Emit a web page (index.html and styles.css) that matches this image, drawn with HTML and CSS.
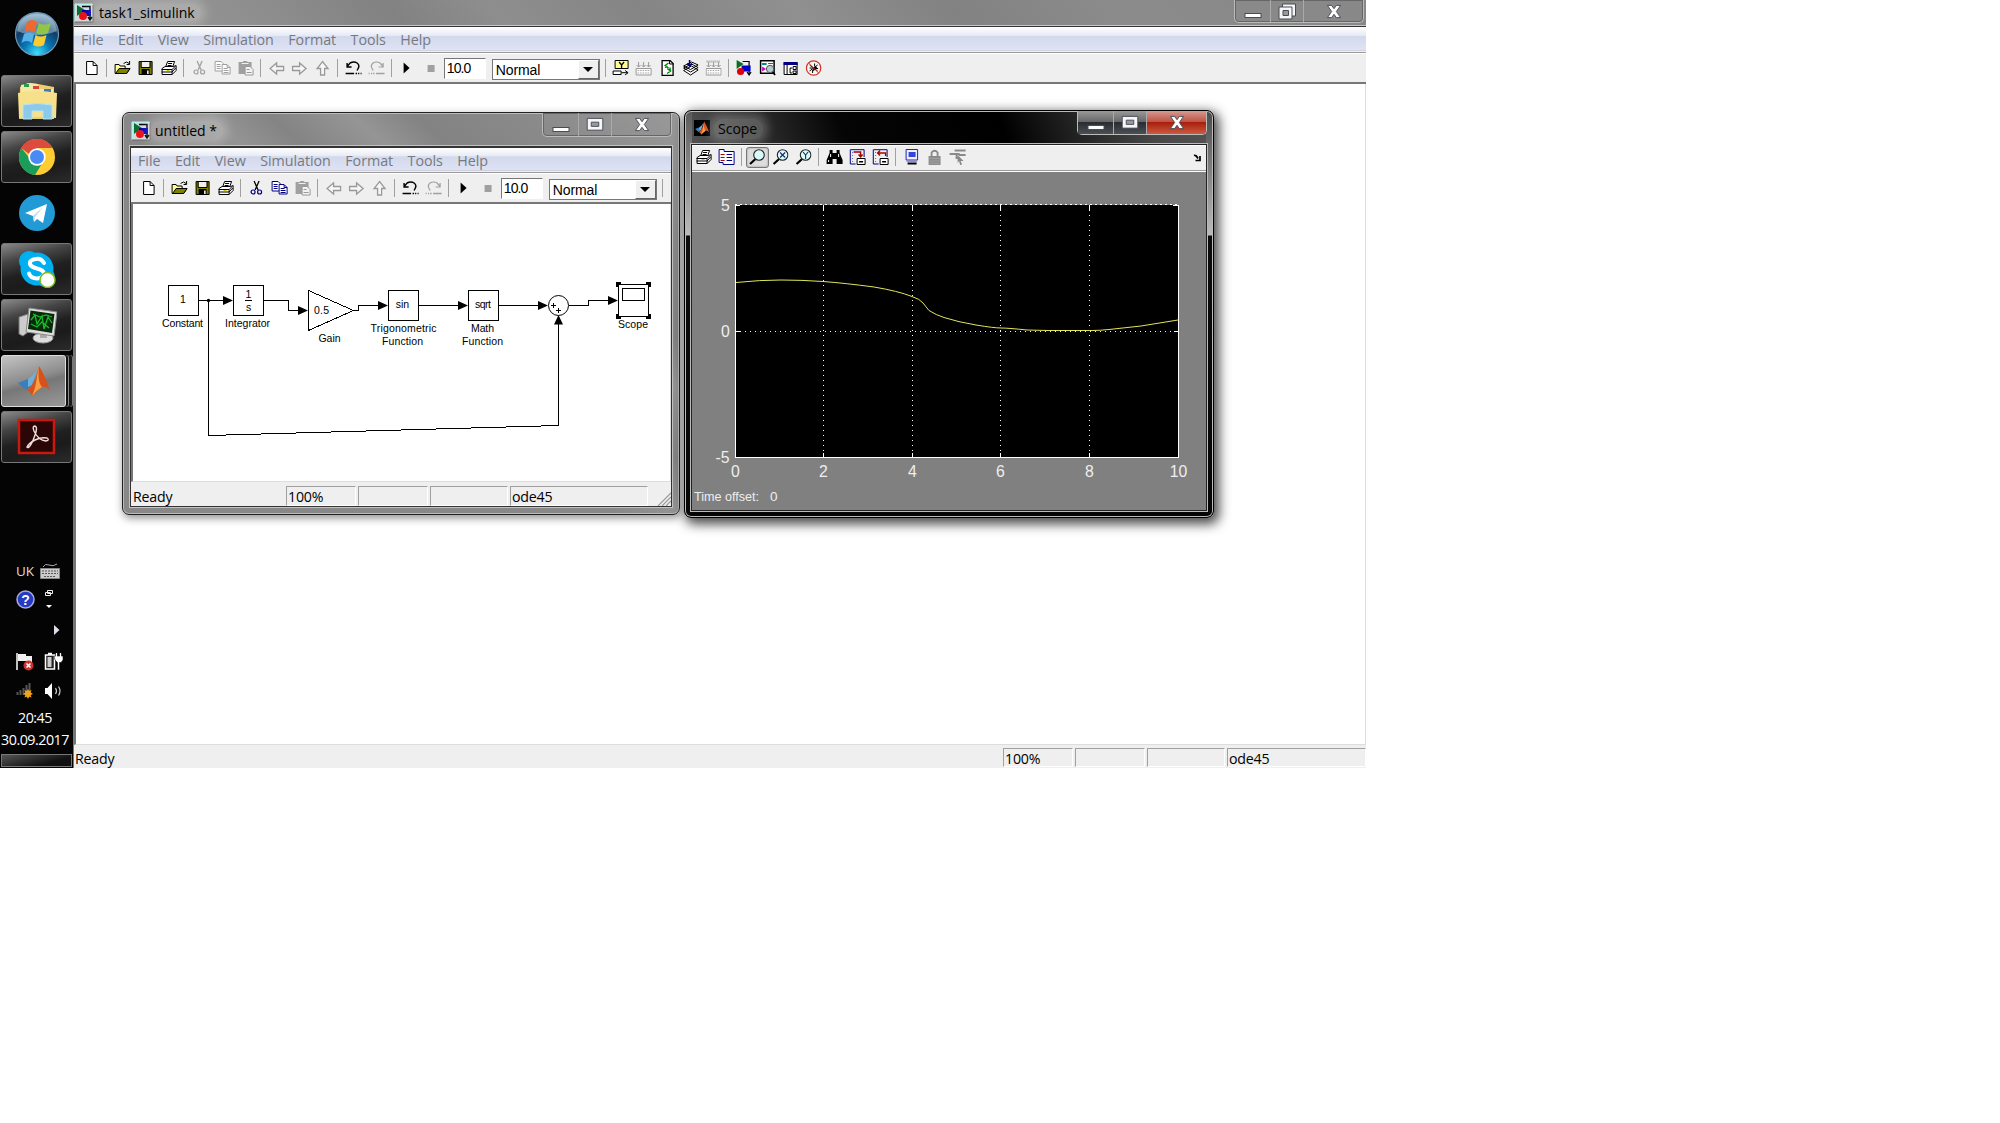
FILE: index.html
```html
<!DOCTYPE html>
<html lang="en">
<head>
<meta charset="utf-8">
<title>task1_simulink</title>
<link rel="stylesheet" href="styles.css">
</head>
<body>
<svg class="sprite" aria-hidden="true">
  <symbol id="i-new" viewBox="0 0 16 16"><path d="M3 1.5h6.500l4 4v9h-10.500z" fill="#fff" stroke="#000"/><path d="M9.500 1.500v4h4" fill="none" stroke="#000"/></symbol>
  <symbol id="i-open" viewBox="0 0 16 16"><path d="M.5 13.500v-9h4l1 1.500h5v3h4.500l-3 4.500z" fill="#ff9" stroke="#000"/><path d="M1 13.500l3.500-5h11l-3.500 5z" fill="#808000" stroke="#000"/><path d="M9 3.500q3-3 5.500 0M15 1v3.500h-3" fill="none" stroke="#000"/></symbol>
  <symbol id="i-save" viewBox="0 0 16 16"><path d="M1.500 1.500h13v13h-13z" fill="#808000" stroke="#000"/><path d="M4 2h8v5h-8z" fill="#efefef"/><path d="M3.500 1.500v6h9v-6" fill="none" stroke="#000"/><path d="M4 9h8v6h-8z"/><path d="M9.500 10.500h1.500v3.500h-1.500z" fill="#fff"/></symbol>
  <symbol id="i-print" viewBox="0 0 16 16"><path d="M5 7l2-5.500h7l-2 5.500M1.500 8.500l3-2h8.500l2.500-1v5l-4 4h-10z" fill="#fff" stroke="#000"/><path d="M7.500 3.500h4M7 5.500h4M1 9.500h10.500l3-3M1 12h10.500l3.500-4M11.500 9.500v5" fill="none" stroke="#000"/><path d="M6 10.500h3" stroke="#cc0"/></symbol>
  <symbol id="i-cut" viewBox="0 0 16 16"><path d="M5.500 1l4 9M10.500 1l-4 9" fill="none" class="k" stroke-width="1.300"/><circle cx="4.500" cy="12" r="2" fill="none" stroke="currentColor" stroke-width="1.200"/><circle cx="11" cy="12" r="2" fill="none" stroke="currentColor" stroke-width="1.200"/></symbol>
  <symbol id="i-copy" viewBox="0 0 16 16"><path d="M.500 1.500h6l2 2v7.500h-8z" fill="#fff" stroke="currentColor"/><path d="M2 4.500h4M2 6.500h4M2 8.500h4" stroke="currentColor"/><path d="M7.500 4.500h5l3 3v6.500h-8z" fill="#fff" stroke="currentColor"/><path d="M9 8.500h4M9 10.500h5M9 12.500h5M12.500 5v2.500h3" fill="none" stroke="currentColor"/></symbol>
  <symbol id="i-paste" viewBox="0 0 16 16"><path d="M1 2h4l1-1h3l1 1h4v12H1z" fill="#a0a0a0"/><path d="M4 3.500h7" stroke="#efefef"/><path d="M7.500 6.500h5l3 3v5.500h-8z" fill="#f4f4f4" stroke="#999"/><path d="M9 9.500h3M9 12.500h5" stroke="#999"/></symbol>
  <symbol id="i-left" viewBox="0 0 16 16"><path d="M15 6.500v4h-7v3.500l-6.500-5.500 6.500-5.500v3.500z" fill="#f7f7f7" stroke="#999" stroke-width="1.300"/></symbol>
  <symbol id="i-right" viewBox="0 0 16 16"><path d="M1 6.500v4h7v3.500l6.500-5.500-6.500-5.500v3.500z" fill="#f7f7f7" stroke="#999" stroke-width="1.300"/></symbol>
  <symbol id="i-up" viewBox="0 0 16 16"><path d="M6 15h4V8.500h3.500L8 1.500 2.500 8.500H6z" fill="#f7f7f7" stroke="#999" stroke-width="1.300"/></symbol>
  <symbol id="i-undo" viewBox="0 0 16 16"><path d="M2 6l2.500-3q4-2 7 0 3 2.500 1 5.500l-1 2M1.500 3v4h4.500" fill="none" stroke="currentColor" stroke-width="1.400"/><path d="M0 13.500h8.500M10 13.500h1.500M12.500 13.500h1.200M15 13.500h1" stroke="currentColor" stroke-width="1.600"/></symbol>
  <symbol id="i-redo" viewBox="0 0 16 16"><path d="M14 6l-2.500-3q-4-2-7 0-3 2.500-1 5.500l1 2M14.500 3v4H10" fill="none" stroke="currentColor" stroke-width="1.200"/><path d="M7.500 13.500H16M6 13.500H4.500M3.500 13.500H2.300M1 13.500H0" stroke="currentColor" stroke-width="1.400"/></symbol>
  <symbol id="i-play" viewBox="0 0 16 16"><path d="M5 2.500v11l6-5.500z"/></symbol>
  <symbol id="i-stop" viewBox="0 0 16 16"><path d="M5 5h7v7H5z" fill="#a0a0a0"/></symbol>
  <symbol id="i-y" viewBox="0 0 16 16"><path d="M2.500.500h13v8h-13z" fill="#ffff90" stroke="#000"/><path d="M6.500 2l2.500 3 2.500-3M9 5v3" fill="none" stroke="#000" stroke-width="1.300"/><path d="M.5 11h8v3.500h-8z" fill="#fff" stroke="#000"/><path d="M9 12.700h6M12.500 10.500l3 2.200-3 2.200" fill="none" stroke="#000"/></symbol>
  <symbol id="i-build" viewBox="0 0 16 16"><path d="M.500 8.500h15v6.500H.500z" fill="#fafafa" stroke="#999"/><path d="M2 10.500h12M2 13h12" stroke="#aaa" stroke-dasharray="1.500 1"/><path d="M3 2v5M8 2v5M13 2v5M1 5l2 2 2-2M6 5l2 2 2-2M11 5l2 2 2-2" fill="none" stroke="#999"/></symbol>
  <symbol id="i-build2" viewBox="0 0 16 16"><use href="#i-build"/><path d="M1 1.500h14" stroke="#999" stroke-width="2" stroke-dasharray="1 1"/></symbol>
  <symbol id="i-update" viewBox="0 0 16 16"><path d="M2.500.500h8l3 3v12h-11z" fill="#fff" stroke="#000" stroke-width="1.300"/><path d="M10 .500v3.500h4" fill="none" stroke="#000"/><path d="M9 3L5.500 5.500 9 8M6 5.500V8M7.500 8.500l3.500 2.500-3.500 2.500M10.500 11V7.500" fill="none" stroke="#080" stroke-width="1.400"/></symbol>
  <symbol id="i-stack" viewBox="0 0 16 16"><path d="M1 10.500L9 6l6.500 4L8 15zM1 8l8-4 6.500 3.500L8 12zM1 6l8-4 6.500 3L8 9.500z" fill="#fff" stroke="#000"/><path d="M7 0v5M4.500 3.500L7 6l2.500-2.500" fill="none" stroke="#008" stroke-width="1.600"/></symbol>
  <symbol id="i-model" viewBox="0 0 16 16"><path d="M1 0v9l7-5z" fill="#087020"/><path d="M7 1.500h6.500v13M11.500 12l2 3 2-3" fill="none" stroke="#000" stroke-width="1.200"/><path d="M6 5.500h9v6H6z" fill="#00c"/><circle cx="5" cy="11.500" r="3.600" fill="#e00010"/></symbol>
  <symbol id="i-explore" viewBox="0 0 16 16"><path d="M1 .800h13.500v12.500H1z" fill="#fff" stroke="#000" stroke-width="1.500"/><path d="M2.500 4h4.500" stroke="#088" stroke-width="2"/><path d="M8.500 3.500h5" stroke="#555"/><path d="M2.500 6.500l4 2.500-4 2.500z" fill="#c0c"/><circle cx="10.500" cy="9" r="3.700" fill="#b4ccd2" stroke="#555"/><path d="M13 12l2.500 3" stroke="#000" stroke-width="1.700"/></symbol>
  <symbol id="i-tree" viewBox="0 0 16 16"><path d="M1.500 2.500h13v12h-13z" fill="#fff" stroke="#000"/><path d="M1 2h14v3H1z" fill="#000080"/><path d="M4.500 5v9M7.500 8v5h2M7.500 8h2M10.500 6.500h3v3h-3zM10.500 11h3v2.500h-3z" fill="none" stroke="#000"/></symbol>
  <symbol id="i-bug" viewBox="0 0 16 16"><circle cx="8" cy="8" r="7.200" fill="#fff" fill-opacity=".5" stroke="#d33022" stroke-width="1.200"/><path d="M4 5l8 6M12 5l-8 6M9 3.500v3M4 8h3M9.500 8.500h3M7 10v3" stroke="#000"/><path d="M7 10l3-4 1.500 1.500L8 11z"/><path d="M3 3l10 10" stroke="#d33022"/></symbol>
  <symbol id="i-params" viewBox="0 0 16 16"><path d="M.500.500h5v2h10v13H4.500v-2h-4z" fill="#fff" stroke="#008"/><path d="M2 5.500h4M2 8.500h4M2 11.500h4" stroke="#a00"/><path d="M8 5.500h5.500M8 8.500h5.500M8 11.500h5.500" fill="none" stroke="#008"/></symbol>
  <symbol id="i-zoom" viewBox="0 0 16 16"><path d="M6.500 10L1 15" stroke="#000" stroke-width="2.200"/><circle cx="10" cy="6" r="5.300" fill="#d8fbfb" stroke="#222" stroke-width="1.100"/></symbol>
  <symbol id="i-zoomx" viewBox="0 0 16 16"><use href="#i-zoom"/><path d="M7.500 3.500l5 5M12.500 3.500l-5 5" stroke="#226" stroke-width="1.100"/></symbol>
  <symbol id="i-zoomy" viewBox="0 0 16 16"><use href="#i-zoom"/><path d="M7.500 3l2.500 3 2.500-3M10 6v4" fill="none" stroke="#226" stroke-width="1.100"/></symbol>
  <symbol id="i-bino" viewBox="0 0 16 16"><path d="M3 1h3v3h4V1h3v3l3 7v4h-6v-5H6v5H0v-4l3-7z"/><path d="M4 5v3M12 5v3M2 11v2" stroke="#fff"/></symbol>
  <symbol id="i-axes" viewBox="0 0 16 16"><path d="M.700.500v14.500H6M1 .700h13.500V8" fill="none" stroke="#008"/><path d="M3 3v11" stroke="#66c" stroke-dasharray="1 2"/><path d="M4 3h7v4M9 5.500l2 2.500 2-2.500" fill="none" stroke="#a00" stroke-width="1.400"/><path d="M7.500 9.500h8v6h-8z" fill="#fff" stroke="#000"/><path d="M9.500 12h4v1.500h-4z"/></symbol>
  <symbol id="i-axes2" viewBox="0 0 16 16"><path d="M.700.500v14.500H6M1 .700h13.500V8" fill="none" stroke="#008"/><path d="M3 3v11" stroke="#66c" stroke-dasharray="1 2"/><path d="M13 7V4H5M7.500 1.500L5 4l2.500 2.500" fill="none" stroke="#a00" stroke-width="1.400"/><path d="M7.500 9.500h8v6h-8z" fill="#fff" stroke="#000"/><path d="M9.500 12h4v1.500h-4z"/></symbol>
  <symbol id="i-float" viewBox="0 0 16 16"><path d="M2.500.500h11.500v10.500h-11.500z" fill="#eef" stroke="#22b"/><path d="M5 3h7v5H5z" fill="#3344d8"/><path d="M4 14.500h9" stroke="#000" stroke-width="1.800"/><path d="M3 12.500h10.500" stroke="#999"/></symbol>
  <symbol id="i-lock" viewBox="0 0 16 16"><path d="M5 7V3.500q3-3.500 6 0V7" fill="none" stroke="#888" stroke-width="1.800"/><path d="M2 7h12v9H2z" fill="#8c8c8c"/><path d="M3 9.500h10M3 12h10M3 14.300h10" stroke="#aaa" stroke-width=".7"/></symbol>
  <symbol id="i-sel" viewBox="0 0 16 16"><path d="M0 5h10M5 1.500h11M7 5v4h3M9 6h7" fill="none" stroke="#8a8a8a" stroke-width="2"/><path d="M8 6l6 6-3 0 1.500 3.500-2 .5-1-4-1.500 2z" fill="#888"/></symbol>
  <symbol id="i-app" viewBox="0 0 20 20"><path d="M1 1h18v18H1z" fill="#d8d8dc"/><path d="M1 19V1h17" fill="none" stroke="#9ff"/><path d="M1 19h18V2" fill="none" stroke="#666"/><path d="M3 2v11l8-6z" fill="#087030"/><path d="M8 3.500h8v13M14 14l2 3 2-3" fill="none" stroke="#000" stroke-width="1.500"/><path d="M8 7h9v6H8z" fill="#0000b0"/><circle cx="9" cy="13" r="4" fill="#e81018"/></symbol>
  <symbol id="i-matlab" viewBox="0 0 32 30"><path d="M0 17l10-4 5 5-7 6z" fill="#3a7fba"/><path d="M10 13q5-3 8-8l2-4-6 18-4 2z" fill="#6cb0dc"/><path d="M21 0q5 8 11 24-5-5-8-3l-10 9q-2-6-6-6 8-2 13-24z" fill="#d8511c"/><path d="M21 0q-2 16 3 21-5 3-10 9 4-9 5-20z" fill="#f6a040"/></symbol>
  <symbol id="w-min" viewBox="0 0 18 16"><rect x="1" y="10.500" width="16" height="4" fill="#fff" stroke="#484c55"/></symbol>
  <symbol id="w-max" viewBox="0 0 18 16"><path d="M.700 1.500h16.600v12.500H.700z" fill="#f6f6f8" stroke="#484c55"/><path d="M5 5.500h8v4.500H5z" fill="#999" stroke="#484c55"/></symbol>
  <symbol id="w-restore" viewBox="0 0 18 17"><path d="M4.500 1h13v12h-13z" fill="#f6f6f8" stroke="#484c55"/><path d="M1 4h13v12H1z" fill="#f6f6f8" stroke="#484c55"/><path d="M5 7.500h5.500v5H5z" fill="#999" stroke="#484c55"/></symbol>
  <symbol id="w-x" viewBox="0 0 16 16"><path d="M1 1.500h4.500L8 5l2.500-3.500H15L10.500 8l4.500 6.500h-4.500L8 11l-2.500 3.500H1L5.500 8z" fill="#fff" stroke="#484c55"/></symbol>
</svg>

<div class="desktop">
  <aside class="taskbar">
    <div class="start"><svg viewBox="0 0 46 46">
      <defs><radialGradient id="orb" cx=".5" cy=".95" r=".9"><stop offset="0" stop-color="#3ee0ff"/><stop offset=".35" stop-color="#0878b8"/><stop offset=".7" stop-color="#123c66"/><stop offset="1" stop-color="#7fa6c4"/></radialGradient></defs>
      <circle cx="23" cy="23" r="21.500" fill="url(#orb)" stroke="#6f9ab4" stroke-width="1.200"/>
      <path d="M3 20Q6 3 23 3t20 17Q23 28 3 20z" fill="#c9dde9" opacity=".45"/>
      <path d="M13 11q5-4 10 0l-2.500 10q-5-3-10 0z" fill="#ec6a32"/><path d="M25 12q5 3 12 0l-3 10q-6 3-12 0z" fill="#92c547"/>
      <path d="M10 23q5-3 10 0l-2 9q-5-4-10.500 0z" fill="#57b1ea"/><path d="M21.500 24q5 3 11 0L30 34q-6 3-11 0z" fill="#fccb30"/></svg></div>
    <div class="task"><svg viewBox="0 0 40 40" width="40" height="40"><path d="M3 6l8-4 10 1 16 3v32H2z" fill="#e8cf70"/><path d="M4 4l9-2 8 1v5h15v4H4z" fill="#f5e7a4"/><path d="M7 3h5v3H7z" fill="#2c9d4a"/><path d="M16 5h6v3h-6z" fill="#d43"/><path d="M27 8h7v3h-7z" fill="#47b"/><path d="M1 12q19-4 39 0l-1 25q-18-2-37 0z" fill="#f6e08a"/><path d="M6 24q14-3 29 0v14H26v-8H15v8H6z" fill="#8cc9ea" stroke="#b6e2f5"/></svg></div>
    <div class="task"><svg viewBox="0 0 38 38" width="38" height="38"><circle cx="19" cy="19" r="18" fill="#fc3"/><path d="M19 19L3.400 10A18 18 0 0 1 34.600 10H19z" fill="#dd4b3e"/><path d="M3.400 10A18 18 0 0 0 17 37l8-13-12-2z" fill="#1b9d5a"/><path d="M3.400 10A18 18 0 0 1 34.600 10H19a9 9 0 0 0-8 6z" fill="#dd4b3e"/><circle cx="19" cy="19" r="8.700" fill="#fff"/><circle cx="19" cy="19" r="7" fill="#4a8af4"/></svg></div>
    <div class="task plain"><svg viewBox="0 0 38 38" width="38" height="38"><circle cx="19" cy="19" r="18" fill="#229ad6"/><path d="M7 19l22-9-4 19-6-4-3 3-1-6z" fill="#fff"/><path d="M15 22l10-9-8 10-1 5z" fill="#c1d9ea"/></svg></div>
    <div class="task"><svg viewBox="0 0 38 38" width="38" height="38"><circle cx="11" cy="11" r="10" fill="#00aff0"/><circle cx="27" cy="27" r="10" fill="#00aff0"/><circle cx="19" cy="19" r="16.500" fill="#00aff0"/><path d="M26 13q-3-5-8-4-7 1-6 5 1 3 7 4.500 7 1.500 7 5.500-1 4-7 4.500-6 0-8-5" fill="none" stroke="#fff" stroke-width="4" stroke-linecap="round"/><circle cx="29.500" cy="30" r="7.500" fill="#fff" stroke="#7fba22" stroke-width="1.500"/></svg></div>
    <div class="task"><svg viewBox="0 0 40 38" width="40" height="38"><path d="M2 11l9-3v18l-5 4-4-2z" fill="#ccc" stroke="#777"/><ellipse cx="26" cy="32" rx="10" ry="5" fill="#ddd" stroke="#999"/><path d="M23 25h7v7h-7z" fill="#aaa"/><path d="M12 2l28 4-3 24-28-4z" fill="#ddd" stroke="#888"/><path d="M13.500 4.500l24 3.500-2.500 19-24-4z" fill="#072a0a"/><path d="M14 14l4-5 2 9 5-8 2 13 4-12 4 6M14 18l6 3 5-5 7 6M16 8l7 3 6-2 6 2" fill="none" stroke="#1bb92a" stroke-width="1.300"/></svg></div>
    <div class="task active"><svg width="32" height="30"><use href="#i-matlab"/></svg></div>
    <div class="task"><svg viewBox="0 0 40 38" width="40" height="38"><path d="M2 2h35v33H2z" fill="#2a0706" stroke="#c9190f" stroke-width="2.500"/><path d="M10 29q2-4 8-7 6-3 12-2 3 2-1 3-8-1-12-10-2-5 1-5 3 1 0 9-3 9-6 12-2 1-2 0z" fill="none" stroke="#f5dfdd" stroke-width="1.400"/></svg></div>
    <div class="tray">
      <div class="row r1"><span>UK</span><svg width="20" height="16" viewBox="0 0 20 16"><path d="M3 4q2-4 6-2t8-1" fill="none" stroke="#aaa"/><path d="M.500 5.500h19v10H.500z" fill="#ccc" stroke="#888"/><path d="M2 8h16M2 10.500h16M4 13.500h12" stroke="#555" stroke-dasharray="2 1"/></svg></div>
      <div class="row r2"><svg width="19" height="19" viewBox="0 0 19 19"><circle cx="9.500" cy="9.500" r="8.500" fill="#2738c4" stroke="#aaaed0" stroke-width="1.500"/><text x="9.500" y="14.500" text-anchor="middle" class="q">?</text></svg><svg width="10" height="20" viewBox="0 0 10 20"><path d="M3.500 1.500h5v3h-5zM1.500 3.500h5v3h-5z" fill="#000" stroke="#eee"/><path d="M2 16h6l-3 3z" fill="#fff"/></svg></div>
      <div class="row r3"><svg width="6" height="10"><path d="M0 0v10l5.500-5z" fill="#dde"/></svg></div>
      <div class="row r4"><svg width="18" height="19" viewBox="0 0 18 19"><path d="M1 1v17" stroke="#fff" stroke-width="1.500"/><path d="M2 2h8v2h6v7H10V9H2z" fill="#f1f1f1"/><circle cx="12.500" cy="13.500" r="5" fill="#d2302a"/><path d="M10.500 11.500l4 4M14.500 11.500l-4 4" stroke="#fff" stroke-width="1.600"/></svg><svg width="19" height="19" viewBox="0 0 19 19"><path d="M1.500 3h9v14h-9zM4 1.500h4" fill="#222" stroke="#fff" stroke-width="1.500"/><path d="M3.500 5h4v10h-4z" fill="#ccc"/><path d="M10 4h9v4l-2 2.500h-1.500V18h-2v-7.500L11 8z" fill="#fff" stroke="#111" stroke-width=".6"/><path d="M12.500 1v4M16.500 1v4" stroke="#fff" stroke-width="1.300"/></svg></div>
      <div class="row r5"><svg width="18" height="18" viewBox="0 0 18 18"><path d="M1.500 10v3M4.500 8v5M7.500 6v7M10.500 3v10M13.500 1v12" stroke="#555" stroke-width="2"/><path d="M12 7l1.200 2 2.300-1-.8 2.500 2.300 1.500-2.300 1 .8 2.500-2.300-.8L12 17l-1.200-2.300-2.300.8.800-2.500-2.300-1 2.300-1.500-.8-2.500 2.300 1z" fill="#f2a31c"/></svg><svg width="19" height="18" viewBox="0 0 19 18"><path d="M1 6h2.500L8 1v16l-4.500-5H1z" fill="#fff"/><path d="M11.500 6q2 3 0 6M14.500 4.500q3 4.500 0 9" fill="none" stroke="#ccc" stroke-width="1.200"/></svg></div>
      <div class="clock">20:45</div><div class="date">30.09.2017</div>
    </div>
    <div class="peek"></div>
  </aside>

  <main class="app">
    <header class="title"><svg width="20" height="20"><use href="#i-app"/></svg><span class="name">task1_simulink</span>
      <div class="wbtns"><b><svg width="18" height="16"><use href="#w-min"/></svg></b><b><svg width="18" height="17"><use href="#w-restore"/></svg></b><b><svg width="16" height="15"><use href="#w-x"/></svg></b></div></header>
    <nav class="menu"><span>File</span><span>Edit</span><span>View</span><span>Simulation</span><span>Format</span><span>Tools</span><span>Help</span></nav>
    <div class="tools">
      <svg><use href="#i-new"/></svg><i></i><svg><use href="#i-open"/></svg><svg><use href="#i-save"/></svg><svg><use href="#i-print"/></svg><i></i>
      <svg class="off"><use href="#i-cut"/></svg><svg class="off"><use href="#i-copy"/></svg><svg><use href="#i-paste"/></svg><i></i>
      <svg><use href="#i-left"/></svg><svg><use href="#i-right"/></svg><svg><use href="#i-up"/></svg><i></i>
      <svg><use href="#i-undo"/></svg><svg class="off"><use href="#i-redo"/></svg><i></i><svg><use href="#i-play"/></svg><svg><use href="#i-stop"/></svg>
      <span class="time">10.0</span><span class="mode">Normal<em></em></span><i></i>
      <svg><use href="#i-y"/></svg><svg><use href="#i-build"/></svg><svg><use href="#i-update"/></svg><svg><use href="#i-stack"/></svg><svg><use href="#i-build2"/></svg><i></i>
      <svg><use href="#i-model"/></svg><svg><use href="#i-explore"/></svg><svg><use href="#i-tree"/></svg><svg><use href="#i-bug"/></svg>
    </div>
    <div class="canvas"></div>
    <footer class="status"><span class="ready">Ready</span><span class="c1">100%</span><span class="c2"></span><span class="c3"></span><span class="c4">ode45</span></footer>
  </main>

  <section class="win model">
    <header class="title"><svg width="20" height="20"><use href="#i-app"/></svg><span class="name">untitled *</span>
      <div class="wbtns"><b><svg width="18" height="16"><use href="#w-min"/></svg></b><b><svg width="18" height="15"><use href="#w-max"/></svg></b><b><svg width="16" height="15"><use href="#w-x"/></svg></b></div></header>
    <div class="client">
      <nav class="menu"><span>File</span><span>Edit</span><span>View</span><span>Simulation</span><span>Format</span><span>Tools</span><span>Help</span></nav>
      <div class="tools">
        <svg><use href="#i-new"/></svg><i></i><svg><use href="#i-open"/></svg><svg><use href="#i-save"/></svg><svg><use href="#i-print"/></svg><i></i>
        <svg class="navy"><use href="#i-cut"/></svg><svg class="navy"><use href="#i-copy"/></svg><svg><use href="#i-paste"/></svg><i></i>
        <svg><use href="#i-left"/></svg><svg><use href="#i-right"/></svg><svg><use href="#i-up"/></svg><i></i>
        <svg><use href="#i-undo"/></svg><svg class="off"><use href="#i-redo"/></svg><i></i><svg><use href="#i-play"/></svg><svg><use href="#i-stop"/></svg>
        <span class="time">10.0</span><span class="mode">Normal<em></em></span><i></i>
      </div>
      <div class="canvas"><svg class="diagram" viewBox="133 204 537 277">
        <g fill="none" stroke="#000" shape-rendering="crispEdges">
          <path d="M168.500 285.500h30v30h-30zM233.500 285.500h30v30h-30zM388.500 290.500h30v30h-30zM468.500 290.500h30v30h-30z"/>
          <path d="M198.500 300.500h33M208.500 300.500v135L558.500 425.500V320M263.500 300.500h25v10h18M308.500 290.500v40l45-20zM353.500 310.500h5v-5h28M418.500 305.500h48M498.500 305.500h48M568.500 305.500h20v-5h28M245 300.500h7"/>
          <path d="M618.500 284.500h30v32h-30z"/><path d="M622.500 288.500h22v12h-22z"/>
          <path d="M553.500 303v5M551 305.500h5M558.500 308v5M556 310.500h5"/>
        </g>
        <circle cx="558.500" cy="305.500" r="10" fill="none" stroke="#000"/>
        <path d="M233 300.500l-10-4.500v9zM308 310.500l-10-4.500v9zM388 305.500l-10-4.500v9zM468 305.500l-10-4.500v9zM548 305.500l-10-4.500v9zM618 300.500l-10-4.500v9zM558.500 315l-4.500 9.500h9z"/><circle cx="208.500" cy="300.500" r="1.700"/>
        <path d="M616 282h5v2h-3v3h-2zM651 282h-5v2h3v3h2zM616 319h5v-2h-3v-3h-2zM651 319h-5v-2h3v-3h2z"/>
        <g class="lbl">
          <text x="183" y="303">1</text><text x="248.500" y="298">1</text><text x="248.500" y="310.500">s</text><text x="321.500" y="313.500" textLength="15">0.5</text><text x="402.500" y="308">sin</text><text x="483" y="308" textLength="16">sqrt</text>
          <text x="182.500" y="327" textLength="41">Constant</text><text x="247.500" y="327" textLength="45">Integrator</text><text x="329.500" y="342" textLength="22">Gain</text>
          <text x="403.500" y="332" textLength="66">Trigonometric</text><text x="402.500" y="345" textLength="41">Function</text><text x="482.500" y="332" textLength="23">Math</text><text x="482.500" y="345" textLength="41">Function</text><text x="633" y="328" textLength="30">Scope</text>
        </g></svg></div>
      <footer class="status"><span class="ready">Ready</span><span class="c1">100%</span><span class="c2"></span><span class="c3"></span><span class="c4">ode45</span><svg width="14" height="14"><path d="M1 14L14 1M5 14l9-9M9 14l5-5" stroke="#999" stroke-width="1.200"/></svg></footer>
    </div>
  </section>

  <section class="win scope">
    <header class="title"><span class="mico"><svg width="14" height="14"><use href="#i-matlab"/></svg></span><span class="name">Scope</span>
      <div class="wbtns"><b><svg width="18" height="16"><use href="#w-min"/></svg></b><b><svg width="18" height="15"><use href="#w-max"/></svg></b><b><svg width="16" height="15"><use href="#w-x"/></svg></b></div></header>
    <div class="client">
      <div class="tools">
        <svg><use href="#i-print"/></svg><svg><use href="#i-params"/></svg><i></i><span class="press"><svg><use href="#i-zoom"/></svg></span><svg><use href="#i-zoomx"/></svg><svg><use href="#i-zoomy"/></svg><i></i>
        <svg><use href="#i-bino"/></svg><svg><use href="#i-axes"/></svg><svg><use href="#i-axes2"/></svg><i></i><svg><use href="#i-float"/></svg><svg><use href="#i-lock"/></svg><svg><use href="#i-sel"/></svg>
        <svg class="dock" viewBox="0 0 8 8"><path d="M1 1.500q2-1 4 3M7 2v4.500H2.500" fill="none" stroke="#000" stroke-width="1.700"/></svg>
      </div>
      <svg class="plot" viewBox="692 172 514 338">
        <path d="M735 205h444v252.500H735z"/>
        <g fill="none" stroke="#fff" shape-rendering="crispEdges">
          <path d="M823.500 205v252M912.500 205v252M1000.500 205v252M1089.500 205v252M735 331.500h444" stroke-dasharray="1 4"/>
          <path d="M735 204.500h444" stroke-dasharray="2 3"/><path d="M735.500 205v252.500h443V205h-6M735 205.500h5M823.500 453v4M912.500 453v4M1000.500 453v4M1089.500 453v4M823.500 205v5M912.500 205v5M1000.500 205v5M1089.500 205v5M735 331.500h5M1174 331.500h5"/>
        </g>
        <path d="M736 282.500Q760 280 781 280T823 281.500 874 287Q898 291 912 296.500 920 299 923 303L929 310.500Q936 315 944 317.500 958 322 976 325T1001 328 1027 330L1048 330.500H1092Q1100 330.500 1109 329.500L1141 326 1178 320" fill="none" stroke="#e4e45a"/>
        <g class="tick"><text x="725.500" y="211">5</text><text x="725.500" y="337">0</text><text x="722.500" y="463">-5</text><text x="735.500" y="477">0</text><text x="823.500" y="477">2</text><text x="912.500" y="477">4</text><text x="1000.500" y="477">6</text><text x="1089.500" y="477">8</text><text x="1178.500" y="477">10</text></g>
        <g class="offset"><text x="694" y="501" textLength="65" lengthAdjust="spacingAndGlyphs">Time offset:</text><text x="770" y="501">0</text></g>
      </svg>
    </div>
  </section>
</div>
</body>
</html>
```
FILE: styles.css
```css
* { box-sizing: border-box; }
body { margin: 0; background: #fff; color: #000; font-family: "Open Sans", "Noto Sans", sans-serif; }
.sprite { position: absolute; width: 0; height: 0; }
svg { display: block; flex: none; }
.desktop { position: relative; width: 1366px; height: 768px; display: grid; grid-template-columns: 74px 1fr; grid-template-rows: 768px; overflow: hidden; }

/* taskbar */
.taskbar { display: flex; flex-direction: column; gap: 4px; background: #040404; padding: 11px 1px 1px; border-right: 1px solid #777; }
.start { height: 60px; flex: none; display: flex; justify-content: center; }
.start svg { width: 46px; height: 46px; }
.task { height: 52px; flex: none; display: flex; align-items: center; justify-content: center; border: 1px solid #777; border-radius: 3px; background: linear-gradient(165deg, #8a8a8a 0, #454545 28%, #202020 52%, #1b1b1b 70%, #2b2b2b 100%); }
.task.plain { border-color: transparent; background: none; }
.task.active { width: 65px; border-color: #ddd; background: linear-gradient(165deg, #c4c4c4, #8d8d8d 45%, #777 55%, #999); box-shadow: 2px 0 0 #111, 3px 0 0 #888, 6px 0 0 #1a1a1a, 7px 0 0 #777; }
.tray { flex: 1; min-height: 0; display: flex; flex-direction: column; color: #fff; padding-top: 94px; }
.row { display: flex; flex: none; align-items: center; padding-left: 15px; height: 22px; font-size: 13.500px; color: #ddd; }
.r1 { gap: 6px; height: 20px; }
.r2 { gap: 9px; margin-top: 7px; }
.r3 { padding-left: 53px; margin-top: 9px; }
.r4 { gap: 10px; margin-top: 9px; }
.r5 { gap: 10px; margin-top: 8px; }
.q { font: bold 14px "Liberation Sans", sans-serif; fill: #fff; }
.clock, .date { text-align: center; font-size: 14.300px; line-height: 22px; letter-spacing: -.5px; margin-left: -3px; }
.clock { margin-top: 5px; }
.date { white-space: nowrap; }
.peek { height: 13px; flex: none; border: 1px solid #777; background: linear-gradient(165deg, #555, #111 70%); }

/* title bars */
.app { display: grid; grid-template-rows: 26px 27px 31px 1fr 23px; background: #efefef; min-width: 0; }
.title { display: flex; align-items: flex-start; font-size: 14px; line-height: 20px; }
.app > .title { padding: 3px 2px 0 0; border-bottom: 1px solid #c8c8c8; overflow: hidden; background: linear-gradient(50deg, #999 0, #8f8f8f 14%, #828282 25%, #8e8e8e 33%, #858585 44%, #909090 56%, #828282 68%, #8b8b8b 80%, #888 100%); }
.name { margin-left: 1px; padding: 0 6px 0 4px; border-radius: 9px; background: rgba(255,255,255,.22); box-shadow: 0 0 10px 5px rgba(255,255,255,.22); white-space: nowrap; }
.app .name { line-height: 21px; margin-top: 1px; height: 17px; display: flex; align-items: center; }
.wbtns { display: grid; grid-template-columns: 36px 33px 59px; height: 24px; margin-left: auto; border: 1px solid #bbb; border-top: 0; border-radius: 0 0 5px 5px; box-shadow: inset 0 0 0 1px #666; }
.app .wbtns { margin-top: -3px; height: 23px; }
.wbtns b { display: flex; justify-content: center; align-items: center; border-right: 1px solid #aaa; }
.wbtns b:last-child { border: 0; }

/* menu, toolbar, status bar */
.menu { display: flex; gap: 14.500px; padding-left: 7px; font-size: 14.300px; letter-spacing: -.05px; line-height: 25px; color: #767980; border-top: 1px solid #333; border-bottom: 1px solid #999; background: linear-gradient(#fff 0, #e6eaf5 34%, #d3d9ec 36%, #dde3f3 90%, #aab 91%, #eef 96%); }
.tools { display: flex; align-items: center; padding-left: 6.200px; background: #efefef; border-top: 1px solid #fff; border-bottom: 2px solid #777; }
.tools > svg { width: 23.200px; height: 16px; }
.tools i { flex: none; width: 7.400px; height: 18px; background: linear-gradient(#a0a0a0, #a0a0a0) 3px 0 / 1px 100% no-repeat; }
.off { color: #a0a0a0; --k: #a0a0a0; }
.k { stroke: var(--k, #000); }
.navy { color: #000080; }
.time, .mode { font: 14px/18px "Liberation Sans", Arial, sans-serif; background: #fff; border: 1px solid #fff; border-top-color: #777; border-left-color: #777; height: 21px; flex: none; }
.time { width: 42px; margin-left: 2px; padding-left: 2px; letter-spacing: -.9px; }
.mode { display: flex; justify-content: space-between; width: 108px; margin: 2px 2px 0 6px; padding-left: 3px; border: 1px solid #777; line-height: 20px; letter-spacing: -.1px; }
.mode em { width: 21px; background: #efefef; border: 1px solid #fff; border-right-color: #666; border-bottom-color: #666; display: flex; align-items: center; justify-content: center; }
.mode em::after { content: ""; border: 5px solid transparent; border-top-color: #000; border-bottom: 0; }
.canvas { background: #fff; border: 1px solid #ddd; border-left: 2px solid #777; border-top: 0; min-height: 0; }
.status { display: flex; align-items: stretch; gap: 2px; background: #efefef; padding-top: 3px; font-size: 14.200px; line-height: 20px; }
.status span { flex: none; padding-left: 1px; border: 1px solid #fff; border-top-color: #a0a0a0; border-left-color: #a0a0a0; letter-spacing: -.2px; }
.status .ready { flex: 1; padding-left: 0; border-color: transparent; }
.c1, .c2 { width: 70px; }
.c3 { width: 78px; }
.c4 { width: 138px; }
.app .status { padding-bottom: 1px; }
.app .status .c4 { width: 139px; }

/* floating windows */
.win { position: absolute; display: flex; flex-direction: column; border: 1px solid #222; border-radius: 7px; padding: 0 6px 6px; }
.win > .title { height: 33px; flex: none; }
.client { flex: 1; min-height: 0; display: grid; }
.model { left: 122px; top: 112px; width: 558px; height: 403px; padding: 0 7px 7px; background: linear-gradient(40deg, #888 0, #888 48%, #949494 54%, #848484 60%, #959595 68%, #838383 74%, #8a8a8a 85%, #999 100%); box-shadow: inset 0 0 0 1px #bbb, 1px 3px 9px rgba(0,0,0,.45); }
.model > .title { padding-left: 1px; }
.model > .title > svg, .model .name { margin-top: 8px; }
.model .name { margin-left: 0; }
.model .client { grid-template-rows: 26px 31px 1fr 24px; border: 1px solid #333; outline: 1px solid #c2c2c2; }
.model .status { padding-top: 4px; line-height: 19px; }
.model .status .ready { padding-left: 1px; }
.model .status svg { align-self: flex-end; margin-left: 7px; }
.diagram { width: 100%; height: 100%; }
.lbl { font: 10.500px "Liberation Sans", Arial, sans-serif; text-anchor: middle; }
.scope { left: 684px; top: 110px; width: 530px; height: 408px; background: linear-gradient(#5b5b5b, #bbb 124px, #0d0d0d 125px, #080808) 0 0 / 7px 100% no-repeat, linear-gradient(#4b4b4b, #bbb 124px, #0d0d0d 125px, #080808) 100% 0 / 7px 100% no-repeat, linear-gradient(75deg, #050505 0 100%) 0 100% / 100% 8px no-repeat, linear-gradient(70deg, #777 0, #606060 17%, #353535 29%, #050505 44%, #000 68%, #484848 90%, #555 100%); border-color: #000; box-shadow: inset 0 0 0 1px #bbb, 3px 4px 12px 2px rgba(0,0,0,.72); }
.scope > .title { padding-left: 3px; }
.scope > .title .name { margin: 8px 0 0 4px; }
.mico { width: 16px; height: 16px; margin-top: 9px; background: #000; padding: 1px; }
.scope .wbtns b { background: linear-gradient(#999, #666 48%, #292d31 50%, #4c4f52); }
.scope .wbtns b:last-child { background: linear-gradient(#d39a91, #c0513f 48%, #a81f0d 50%, #cc5a42); border-radius: 0 0 4px; }
.scope .client { grid-template-rows: 27px 1fr; border: 1px solid #222; outline: 1px solid #bbb; background: #808080; }
.scope .tools { padding: 0 0 3px; border-bottom: 1px solid #fff; box-shadow: inset 0 -1px #999; }
.press { width: 23.200px; height: 21px; display: grid; place-items: center; border: 1px solid #777; border-radius: 3px; background: #ddd; box-shadow: inset 0 0 2px #888; }
.press svg { width: 16px; height: 16px; }
.tools > .dock { width: 8px; height: 8px; margin: 2px 5px 0 auto; }
.plot { width: 100%; height: 100%; }
.tick { font: 15.800px "Liberation Sans", Arial, sans-serif; fill: #eee; text-anchor: middle; }
.offset { font: 13.500px "Liberation Sans", Arial, sans-serif; fill: #eee; }
```
